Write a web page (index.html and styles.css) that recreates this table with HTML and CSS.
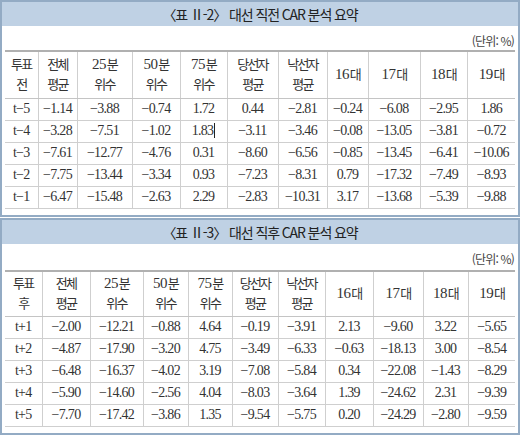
FILE: index.html
```html
<!DOCTYPE html>
<html lang="ko">

<head>
  <meta charset="UTF-8">
  <title>대선 CAR 분석 요약</title>
  <link rel="stylesheet" href="styles.css">
</head>

<body>
  <div class="page">
    <div class="panel panel-pre">
      <div class="panel-title">〈표 Ⅱ-2〉 대선 직전 CAR 분석 요약</div>
      <div class="unit">(단위: %)</div>
      <table class="car-table">
        <colgroup>
          <col><col><col><col><col><col><col><col><col><col><col>
        </colgroup>
        <thead>
          <tr>
            <th>투표<br>전</th>
            <th>전체<br>평균</th>
            <th><span class="num">25</span>분<br>위수</th>
            <th><span class="num">50</span>분<br>위수</th>
            <th><span class="num">75</span>분<br>위수</th>
            <th>당선자<br>평균</th>
            <th>낙선자<br>평균</th>
            <th><span class="num">16</span>대</th>
            <th><span class="num">17</span>대</th>
            <th><span class="num">18</span>대</th>
            <th><span class="num">19</span>대</th>
          </tr>
        </thead>
        <tbody>
          <tr><td>t−5</td><td>−1.14</td><td>−3.88</td><td>−0.74</td><td>1.72</td><td>0.44</td><td>−2.81</td><td>−0.24</td><td>−6.08</td><td>−2.95</td><td>1.86</td></tr>
          <tr><td>t−4</td><td>−3.28</td><td>−7.51</td><td>−1.02</td><td>1.83<span class="caret"></span></td><td>−3.11</td><td>−3.46</td><td>−0.08</td><td>−13.05</td><td>−3.81</td><td>−0.72</td></tr>
          <tr><td>t−3</td><td>−7.61</td><td>−12.77</td><td>−4.76</td><td>0.31</td><td>−8.60</td><td>−6.56</td><td>−0.85</td><td>−13.45</td><td>−6.41</td><td>−10.06</td></tr>
          <tr><td>t−2</td><td>−7.75</td><td>−13.44</td><td>−3.34</td><td>0.93</td><td>−7.23</td><td>−8.31</td><td>0.79</td><td>−17.32</td><td>−7.49</td><td>−8.93</td></tr>
          <tr><td>t−1</td><td>−6.47</td><td>−15.48</td><td>−2.63</td><td>2.29</td><td>−2.83</td><td>−10.31</td><td>3.17</td><td>−13.68</td><td>−5.39</td><td>−9.88</td></tr>
        </tbody>
      </table>
    </div>

    <div class="panel panel-post">
      <div class="panel-title">〈표 Ⅱ-3〉 대선 직후 CAR 분석 요약</div>
      <div class="unit">(단위: %)</div>
      <table class="car-table">
        <colgroup>
          <col><col><col><col><col><col><col><col><col><col><col>
        </colgroup>
        <thead>
          <tr>
            <th>투표<br>후</th>
            <th>전체<br>평균</th>
            <th><span class="num">25</span>분<br>위수</th>
            <th><span class="num">50</span>분<br>위수</th>
            <th><span class="num">75</span>분<br>위수</th>
            <th>당선자<br>평균</th>
            <th>낙선자<br>평균</th>
            <th><span class="num">16</span>대</th>
            <th><span class="num">17</span>대</th>
            <th><span class="num">18</span>대</th>
            <th><span class="num">19</span>대</th>
          </tr>
        </thead>
        <tbody>
          <tr><td>t+1</td><td>−2.00</td><td>−12.21</td><td>−0.88</td><td>4.64</td><td>−0.19</td><td>−3.91</td><td>2.13</td><td>−9.60</td><td>3.22</td><td>−5.65</td></tr>
          <tr><td>t+2</td><td>−4.87</td><td>−17.90</td><td>−3.20</td><td>4.75</td><td>−3.49</td><td>−6.33</td><td>−0.63</td><td>−18.13</td><td>3.00</td><td>−8.54</td></tr>
          <tr><td>t+3</td><td>−6.48</td><td>−16.37</td><td>−4.02</td><td>3.19</td><td>−7.08</td><td>−5.84</td><td>0.34</td><td>−22.08</td><td>−1.43</td><td>−8.29</td></tr>
          <tr><td>t+4</td><td>−5.90</td><td>−14.60</td><td>−2.56</td><td>4.04</td><td>−8.03</td><td>−3.64</td><td>1.39</td><td>−24.62</td><td>2.31</td><td>−9.39</td></tr>
          <tr><td>t+5</td><td>−7.70</td><td>−17.42</td><td>−3.86</td><td>1.35</td><td>−9.54</td><td>−5.75</td><td>0.20</td><td>−24.29</td><td>−2.80</td><td>−9.59</td></tr>
        </tbody>
      </table>
    </div>
  </div>
</body>

</html>
```

FILE: styles.css
```css
* {
  box-sizing: border-box;
}

body {
  margin: 0;
  padding: 0;
  background: #ffffff;
  font-family: 'Liberation Serif', 'Noto Sans CJK KR', serif;
  color: #333;
}

.page {
  display: flex;
  flex-direction: column;
  gap: 1px;
  width: 520px;
}

.panel {
  height: 217px;
  border: 2px solid #93abc4;
  background: #ffffff;
  display: flex;
  flex-direction: column;
  padding: 0 3px;
}

.panel-title {
  margin: 0 -3px;
  height: 24px;
  background: #bfd1e4;
  text-align: center;
  font-family: 'Noto Sans CJK KR', 'Noto Sans', sans-serif;
  font-size: 14px;
  line-height: 24px;
  letter-spacing: -1.1px;
  color: #222;
}

.unit {
  height: 24px;
  display: flex;
  align-items: flex-end;
  justify-content: flex-end;
  padding: 0 1px 1px 0;
  font-family: 'Noto Sans CJK KR', 'Noto Sans', sans-serif;
  font-size: 12px;
  letter-spacing: -0.8px;
  color: #444;
}

.panel-post .unit {
  height: 26px;
  padding-bottom: 3px;
}

.car-table {
  width: 100%;
  border-collapse: collapse;
  table-layout: fixed;
}

.car-table th,
.car-table td {
  padding: 0;
  text-align: center;
  border-left: 1px solid #cfcfcf;
  border-bottom: 1px solid #cfcfcf;
  white-space: nowrap;
  overflow: hidden;
}

.car-table th:first-child,
.car-table td:first-child {
  border-left: none;
}

.car-table th {
  height: 47px;
  border-top: 2px solid #b0b0b0;
  border-bottom: 1px solid #c4c4c4;
  font-weight: normal;
  font-size: 13px;
  line-height: 20px;
  letter-spacing: -1.8px;
  color: #333;
}

.car-table th .num {
  font-size: 15px;
  letter-spacing: -0.6px;
  margin-right: 1px;
}

.panel-post .car-table th {
  height: 45px;
}

.car-table td {
  height: 22px;
  font-size: 14px;
  line-height: 20px;
  letter-spacing: -0.7px;
  color: #333;
}

.caret {
  display: inline-block;
  width: 1px;
  height: 15px;
  margin-left: 1px;
  vertical-align: -3px;
  background: #222;
}

/* column widths, measured from the source tables */
.panel-pre col:nth-child(1) { width: 33px; }
.panel-pre col:nth-child(2) { width: 39px; }
.panel-pre col:nth-child(3) { width: 55px; }
.panel-pre col:nth-child(4) { width: 48px; }
.panel-pre col:nth-child(5) { width: 47px; }
.panel-pre col:nth-child(6) { width: 51px; }
.panel-pre col:nth-child(7) { width: 49px; }
.panel-pre col:nth-child(8) { width: 41px; }
.panel-pre col:nth-child(9) { width: 52px; }
.panel-pre col:nth-child(10) { width: 47px; }
.panel-pre col:nth-child(11) { width: 48px; }

.panel-post col:nth-child(1) { width: 37px; }
.panel-post col:nth-child(2) { width: 48px; }
.panel-post col:nth-child(3) { width: 53px; }
.panel-post col:nth-child(4) { width: 45px; }
.panel-post col:nth-child(5) { width: 44px; }
.panel-post col:nth-child(6) { width: 46px; }
.panel-post col:nth-child(7) { width: 47px; }
.panel-post col:nth-child(8) { width: 48px; }
.panel-post col:nth-child(9) { width: 50px; }
.panel-post col:nth-child(10) { width: 45px; }
.panel-post col:nth-child(11) { width: 47px; }
```
